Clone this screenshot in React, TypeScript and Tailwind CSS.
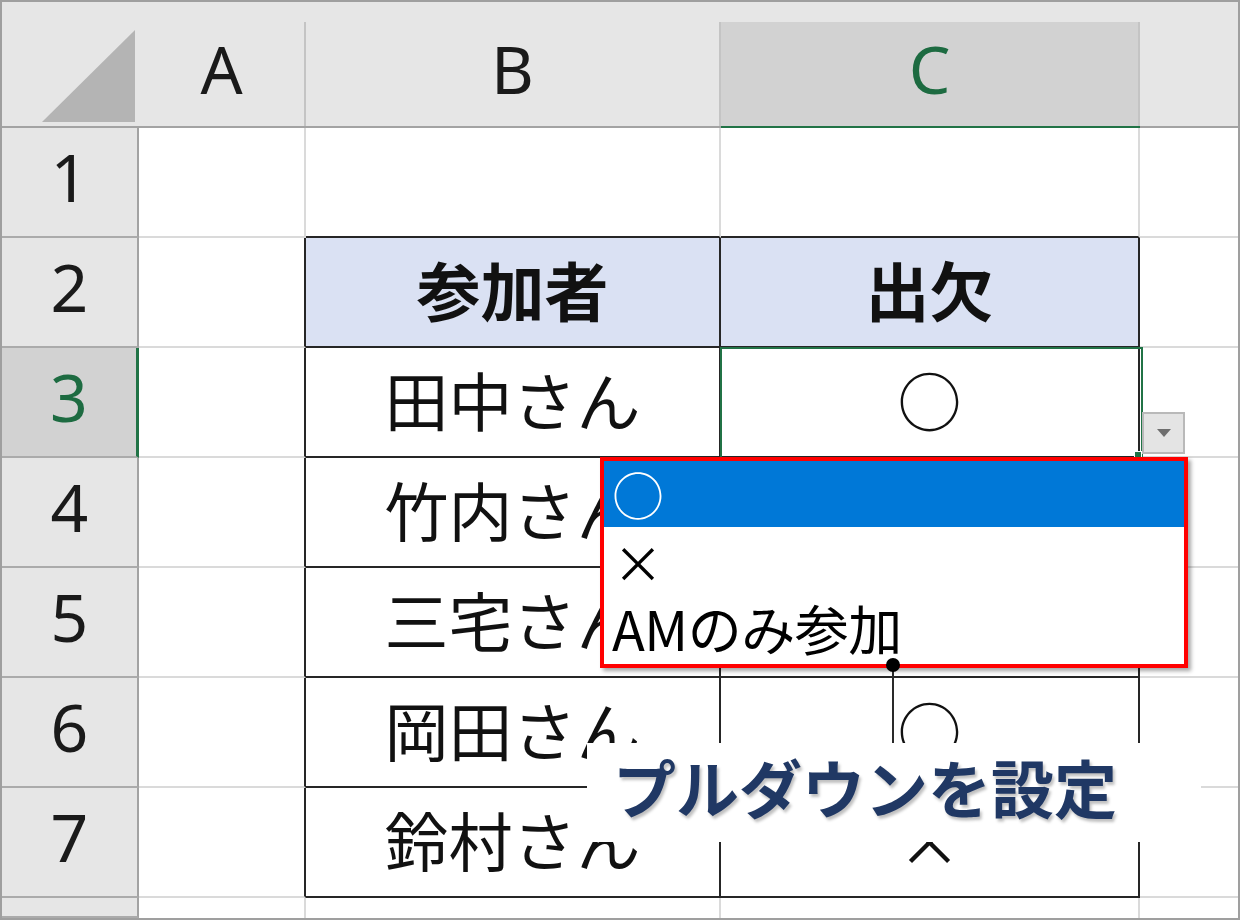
const LATIN = "font-['Noto_Sans','Open_Sans',sans-serif]";
const JP = "font-['Noto_Sans_CJK_JP','Noto_Sans',sans-serif]";

type Row = { n: number; b: string; c: string; head?: boolean };

const ROWS: Row[] = [
  { n: 1, b: "", c: "" },
  { n: 2, b: "参加者", c: "出欠", head: true },
  { n: 3, b: "田中さん", c: "○" },
  { n: 4, b: "竹内さん", c: "×" },
  { n: 5, b: "三宅さん", c: "○" },
  { n: 6, b: "岡田さん", c: "○" },
  { n: 7, b: "鈴村さん", c: "×" },
];

function ColHeader({ label, active, last }: { label: string; active?: boolean; last?: boolean }) {
  return (
    <div
      className={`flex flex-col pt-[20px] border-b-2 ${
        active ? "border-b-[#217346]" : "border-b-[#a3a3a3]"
      }`}
    >
      <div
        className={`flex-1 flex items-center justify-center pb-[12px] ${last ? "" : "border-r-2 border-r-[#c4c4c4]"} ${
          active ? "bg-[#d2d2d2] text-[#1d6b41]" : "text-[#1a1a1a]"
        }`}
      >
        <span className={`${LATIN} text-[66px] leading-none`}>{label}</span>
      </div>
    </div>
  );
}

function RowHeader({ n, active }: { n?: number; active?: boolean }) {
  return (
    <div
      className={`flex items-center justify-center pb-[12px] border-b-2 border-b-[#ababab] ${
        active
          ? "bg-[#d2d2d2] text-[#1d6b41] border-r-[3px] border-r-[#217346]"
          : "bg-[#e6e6e6] text-[#1a1a1a] border-r-2 border-r-[#a3a3a3]"
      }`}
    >
      {n !== undefined && <span className={`${LATIN} text-[66px] leading-none`}>{n}</span>}
    </div>
  );
}

export default function App() {
  return (
    <div className="w-[1240px] h-[920px] bg-white border-2 border-[#9f9f9f] overflow-hidden">
      <div className="relative w-full h-full">
        <div className="grid h-full grid-cols-[137px_167px_415px_419px_1fr] grid-rows-[126px_repeat(7,110px)_1fr] bg-white">
          {/* corner */}
          <div className="flex items-end justify-end pr-[4px] pb-[4px] bg-[#e6e6e6] border-b-2 border-b-[#a3a3a3]">
            <svg width="93" height="92" viewBox="0 0 93 92">
              <polygon points="0,92 93,92 93,0" fill="#b4b4b4" />
            </svg>
          </div>
          <div className="bg-[#e6e6e6] grid"><ColHeader label="A" /></div>
          <div className="bg-[#e6e6e6] grid"><ColHeader label="B" /></div>
          <div className="bg-[#e6e6e6] grid"><ColHeader label="C" active /></div>
          <div className="bg-[#e6e6e6] grid"><ColHeader label="" last /></div>

          {ROWS.map((r) => {
            const inTable = r.n >= 2;
            return [
              <RowHeader key={`h${r.n}`} n={r.n} active={r.n === 3} />,
              <div
                key={`a${r.n}`}
                className={`border-b-2 border-b-[#dadada] border-r-2 ${
                  inTable ? "border-r-[#262626]" : "border-r-[#dadada]"
                }`}
              />,
              <div
                key={`b${r.n}`}
                className={`flex items-center justify-center pb-[8px] border-b-2 border-r-2 ${
                  inTable ? "border-r-[#262626] border-b-[#262626]" : "border-r-[#dadada] border-b-[#262626]"
                } ${r.head ? "bg-[#dae1f3]" : ""}`}
              >
                <span
                  className={`${JP} text-[64px] leading-none text-[#111] ${r.head ? "font-bold" : "font-normal"}`}
                >
                  {r.b}
                </span>
              </div>,
              <div
                key={`c${r.n}`}
                className={`flex items-center justify-center pb-[8px] border-b-2 border-r-2 ${
                  inTable ? "border-r-[#262626] border-b-[#262626]" : "border-r-[#dadada] border-b-[#262626]"
                } ${r.head ? "bg-[#dae1f3]" : ""}`}
              >
                <span
                  className={`${JP} text-[64px] leading-none text-[#111] ${r.head ? "font-bold" : "font-normal"}`}
                >
                  {r.c}
                </span>
              </div>,
              <div key={`d${r.n}`} className="border-b-2 border-b-[#dadada]" />,
            ];
          })}

          {/* partial row 8 */}
          <RowHeader />
          <div className="border-r-2 border-r-[#dadada]" />
          <div className="border-r-2 border-r-[#dadada]" />
          <div className="border-r-2 border-r-[#dadada]" />
          <div />
        </div>

        {/* selected cell C3 */}
        <div className="absolute left-[718px] top-[345px] w-[423px] h-[112px] border-2 border-[#217346]" />
        <div className="absolute left-[1132px] top-[449px] w-[8px] h-[8px] bg-[#217346] border border-white" />

        {/* dropdown button */}
        <div className="absolute left-[1140px] top-[410px] w-[43px] h-[42px] bg-[#e4e4e4] border-2 border-[#b9b9b9] flex items-center justify-center">
          <svg width="14" height="8" viewBox="0 0 14 8">
            <polygon points="0,0 14,0 7,8" fill="#6e6e6e" />
          </svg>
        </div>

        {/* dropdown list */}
        <div className="absolute left-[598px] top-[455px] w-[588px] h-[211px] bg-white border-4 border-[#ff0000] shadow-[3px_3px_4px_rgba(0,0,0,0.35)] flex flex-col">
          <div className="h-[66px] bg-[#0078d7] flex items-center pl-[8px]">
            <span className={`${JP} text-[52px] leading-none text-white font-light`}>○</span>
          </div>
          <div className="h-[67px] flex items-center pl-[9px]">
            <span className={`${JP} text-[50px] leading-none text-black`}>×</span>
          </div>
          <div className="h-[67px] flex items-center pl-[8px]">
            <span className={`${JP} text-[54px] leading-none text-black tracking-[-0.5px]`}>AMのみ参加</span>
          </div>
        </div>

        {/* callout line + dot */}
        <div className="absolute left-[890px] top-[663px] w-[1.5px] h-[80px] bg-[#2a2a2a]" />
        <div className="absolute left-[884px] top-[656px] w-[14px] h-[14px] rounded-full bg-black" />

        {/* label */}
        <div className="absolute left-[585px] top-[741px] w-[614px] h-[99px] bg-white flex items-center pl-[26px] pb-[14px]">
          <span
            className={`${JP} text-[63px] leading-none font-bold text-[#203864] [text-shadow:2px_3px_3px_rgba(0,0,0,0.25)]`}
          >
            プルダウンを設定
          </span>
        </div>
      </div>
    </div>
  );
}
